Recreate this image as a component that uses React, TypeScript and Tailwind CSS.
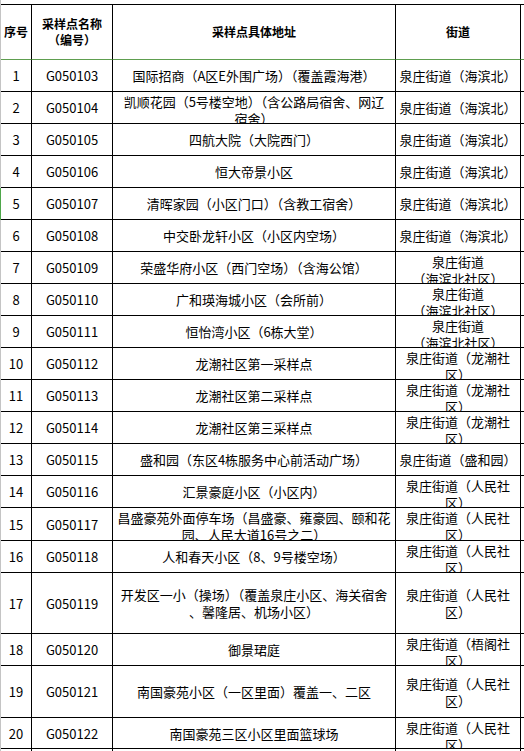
import React from "react";

type Row = {
  n: string;
  id: string;
  addr: string[];
  st: string[];
  hc: string;
  tall?: boolean;
  sel?: boolean;
};

const HB = ["泉庄街道（海滨北）"];
const HBS = ["泉庄街道", "（海滨北社区）"];
const LC = ["泉庄街道（龙潮社", "区）"];
const RM = ["泉庄街道（人民社", "区）"];

const rows: Row[] = [
  { n: "1", id: "G050103", addr: ["国际招商（A区E外围广场）（覆盖霞海港）"], st: HB, hc: "h-[32px]" },
  { n: "2", id: "G050104", addr: ["凯顺花园（5号楼空地）（含公路局宿舍、网辽", "宿舍）"], st: HB, hc: "h-[32px]" },
  { n: "3", id: "G050105", addr: ["四航大院（大院西门）"], st: HB, hc: "h-[32px]" },
  { n: "4", id: "G050106", addr: ["恒大帝景小区"], st: HB, hc: "h-[32px]" },
  { n: "5", id: "G050107", addr: ["清晖家园（小区门口）（含教工宿舍）"], st: HB, hc: "h-[32px]", sel: true },
  { n: "6", id: "G050108", addr: ["中交卧龙轩小区（小区内空场）"], st: HB, hc: "h-[32px]" },
  { n: "7", id: "G050109", addr: ["荣盛华府小区（西门空场）（含海公馆）"], st: HBS, hc: "h-[32px]" },
  { n: "8", id: "G050110", addr: ["广和瑛海城小区（会所前）"], st: HBS, hc: "h-[32px]" },
  { n: "9", id: "G050111", addr: ["恒怡湾小区（6栋大堂）"], st: HBS, hc: "h-[32px]" },
  { n: "10", id: "G050112", addr: ["龙潮社区第一采样点"], st: LC, hc: "h-[32px]" },
  { n: "11", id: "G050113", addr: ["龙潮社区第二采样点"], st: LC, hc: "h-[32px]" },
  { n: "12", id: "G050114", addr: ["龙潮社区第三采样点"], st: LC, hc: "h-[32px]" },
  { n: "13", id: "G050115", addr: ["盛和园（东区4栋服务中心前活动广场）"], st: ["泉庄街道（盛和园）"], hc: "h-[32px]" },
  { n: "14", id: "G050116", addr: ["汇景豪庭小区（小区内）"], st: RM, hc: "h-[32px]" },
  { n: "15", id: "G050117", addr: ["昌盛豪苑外面停车场（昌盛豪、雍豪园、颐和花", "园、人民大道16号之二）"], st: RM, hc: "h-[33px]" },
  { n: "16", id: "G050118", addr: ["人和春天小区（8、9号楼空场）"], st: RM, hc: "h-[32px]" },
  { n: "17", id: "G050119", addr: ["开发区一小（操场）（覆盖泉庄小区、海关宿舍", "、馨隆居、机场小区）"], st: RM, hc: "h-[61px]", tall: true },
  { n: "18", id: "G050120", addr: ["御景珺庭"], st: ["泉庄街道（梧阁社", "区）"], hc: "h-[32px]" },
  { n: "19", id: "G050121", addr: ["南国豪苑小区（一区里面）覆盖一、二区"], st: RM, hc: "h-[52px]", tall: true },
  { n: "20", id: "G050122", addr: ["南国豪苑三区小区里面篮球场"], st: RM, hc: "h-[31px]" },
];

const COLS = "grid grid-cols-[1px_31px_81px_283px_125px_1fr]";

function Cell({ lines, top }: { lines: string[]; top: boolean }) {
  return (
    <div
      className={`border-r border-b border-black flex flex-col items-center overflow-hidden whitespace-nowrap ${
        top ? "justify-start pt-[1px]" : "justify-center"
      }`}
    >
      {lines.map((l, i) => (
        <span key={i} className="block">
          {l}
        </span>
      ))}
    </div>
  );
}

export default function App() {
  return (
    <div className="w-[524px] h-[751px] overflow-hidden bg-white text-black font-['Noto_Sans_CJK_SC',sans-serif] text-[13px] leading-[17px]">
      {/* top spacer */}
      <div className={`${COLS} h-[5px]`}>
        <div className="bg-[#c4c4c4]" />
        <div className="col-span-5 border-b border-black" />
      </div>
      {/* header */}
      <div className={`${COLS} h-[55px] font-bold text-[12px] leading-[16px]`}>
        <div className="bg-[#c4c4c4]" />
        <div className="border-r border-b border-r-black border-b-[#5e9e4f] flex items-center justify-center">序号</div>
        <div className="border-r border-b border-r-black border-b-[#5e9e4f] flex flex-col items-center justify-center">
          <span>采样点名称</span>
          <span>（编号）</span>
        </div>
        <div className="border-r border-b border-r-black border-b-[#5e9e4f] flex items-center justify-center">采样点具体地址</div>
        <div className="border-r border-b border-r-black border-b-[#5e9e4f] flex items-center justify-center">街道</div>
        <div className="border-b border-b-[#5e9e4f]" />
      </div>
      {rows.map((r) => (
        <div key={r.n} className={`${COLS} ${r.hc}`}>
          <div className={r.sel ? "bg-[#4ea64a]" : "bg-[#c4c4c4]"} />
          <Cell lines={[r.n]} top={false} />
          <Cell lines={[r.id]} top={false} />
          <Cell lines={r.addr} top={r.addr.length > 1 && !r.tall} />
          <Cell lines={r.st} top={r.st.length > 1 && !r.tall} />
          <div className="border-b border-black" />
        </div>
      ))}
      <div className={`${COLS} h-[32px]`}>
        <div className="bg-[#c4c4c4]" />
        <div className="border-r border-b border-black" />
        <div className="border-r border-b border-black" />
        <div className="border-r border-b border-black" />
        <div className="border-r border-b border-black" />
        <div className="border-b border-black" />
      </div>
    </div>
  );
}
